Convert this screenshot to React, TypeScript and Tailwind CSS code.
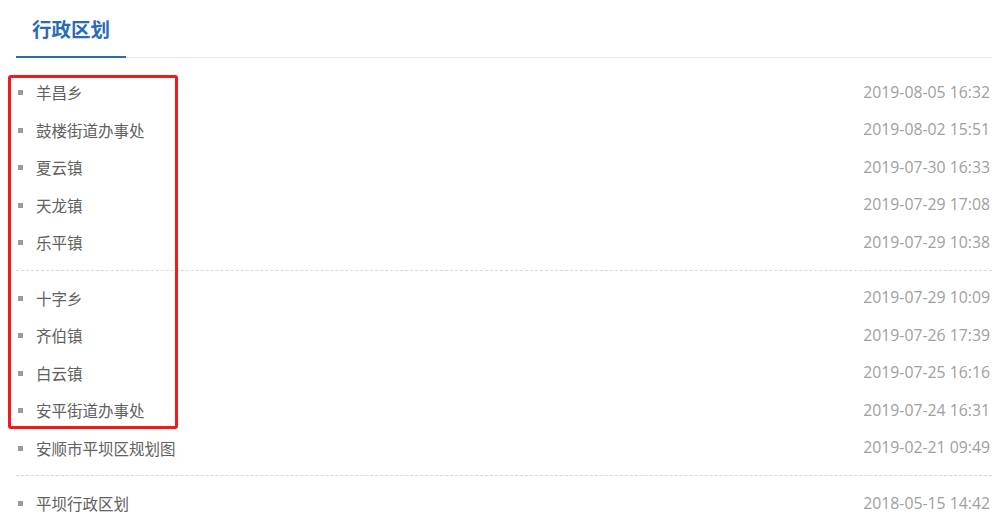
import React from 'react'

type Item = { title: string; date: string }

const groups: Item[][] = [
  [
    { title: '羊昌乡', date: '2019-08-05 16:32' },
    { title: '鼓楼街道办事处', date: '2019-08-02 15:51' },
    { title: '夏云镇', date: '2019-07-30 16:33' },
    { title: '天龙镇', date: '2019-07-29 17:08' },
    { title: '乐平镇', date: '2019-07-29 10:38' },
  ],
  [
    { title: '十字乡', date: '2019-07-29 10:09' },
    { title: '齐伯镇', date: '2019-07-26 17:39' },
    { title: '白云镇', date: '2019-07-25 16:16' },
    { title: '安平街道办事处', date: '2019-07-24 16:31' },
    { title: '安顺市平坝区规划图', date: '2019-02-21 09:49' },
  ],
  [{ title: '平坝行政区划', date: '2018-05-15 14:42' }],
]

const Row = ({ item }: { item: Item }) => (
  <li className="flex h-[37.5px] items-center justify-between pl-[2px] pr-[2px]">
    <div className="flex items-center">
      <span className="inline-block h-[5px] w-[5px] bg-[#9a9a9a]" />
      <span className="ml-[13px] text-[15.5px] text-[#606060]">{item.title}</span>
    </div>
    <span className="text-[15.8px] text-[#a0a0a0] [font-family:'Open_Sans',sans-serif]">{item.date}</span>
  </li>
)

export default function App() {
  return (
    <div className="relative h-[532px] w-[1000px] overflow-hidden bg-white pl-4 pr-2 [font-family:'Noto_Sans_CJK_SC','Noto_Sans',sans-serif]">
      <div className="flex h-[58px] items-end border-b border-[#e6e6e6]">
        <div className="-mb-px flex h-[58px] w-[110px] items-center justify-center border-b-2 border-[#2a6bb5] pt-[1px]">
          <span className="text-[19.5px] font-bold text-[#2a6bb5]">行政区划</span>
        </div>
      </div>

      <div className="pt-[16px]">
        {groups.map((g, i) => (
          <ul
            key={i}
            className={
              i < groups.length - 1
                ? 'border-b border-dashed border-[#d9d9d9] pb-[8px] mb-[9px]'
                : ''
            }
          >
            {g.map((it) => (
              <Row key={it.title} item={it} />
            ))}
          </ul>
        ))}
      </div>

      {/* highlight annotation */}
      <div className="pointer-events-none absolute left-[8px] top-[75px] h-[354px] w-[170px] rounded-[3px] border-[3px] border-[#f31a1a]" />
    </div>
  )
}
